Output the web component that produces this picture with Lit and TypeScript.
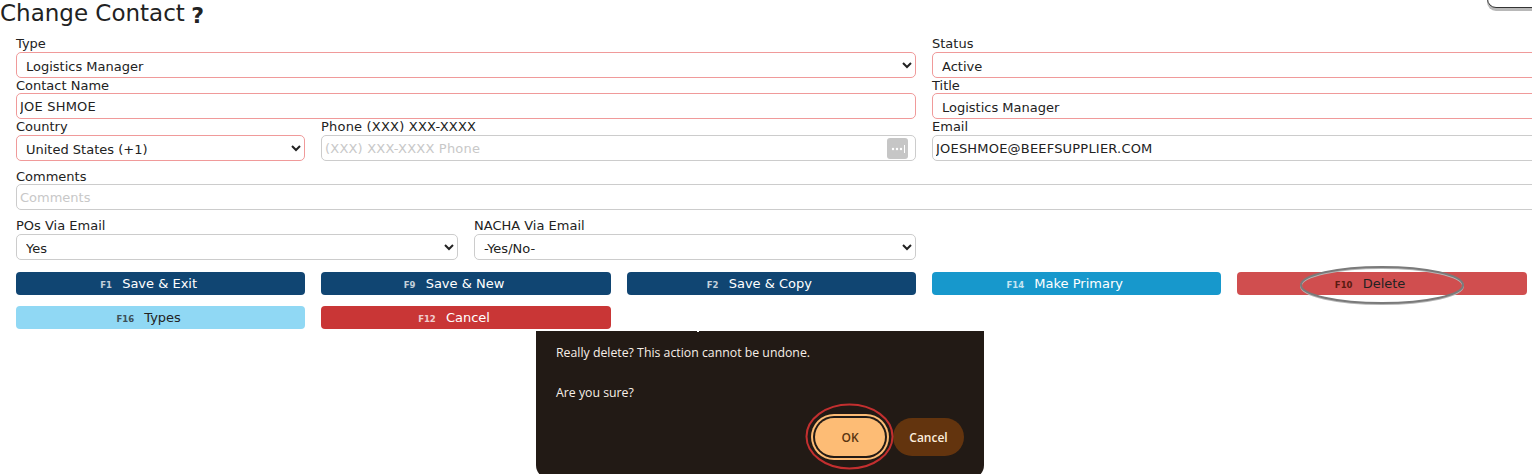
import { LitElement, html, css } from 'lit';
import { customElement } from 'lit/decorators.js';

/**
 * AppRoot - the "Change Contact" form with its delete confirmation open
 */
@customElement('app-root')
export class AppRoot extends LitElement {
  static styles = css`
    :host {
      display: block;
      position: relative;
      width: 1532px;
      height: 474px;
      overflow: hidden;
      background: #fff;
      color: #222;
      font-family: 'DejaVu Sans', Verdana, sans-serif;
      font-size: 13px;
    }

    h1 {
      margin: 0;
      height: 37px;
      font-size: 23px;
      font-weight: 400;
      line-height: 26px;
      color: #222;
      white-space: nowrap;
    }

    .help {
      font-size: 22px;
      font-weight: 700;
      line-height: 26px;
      position: relative;
      top: 2px;
      left: -1px;
    }

    .form {
      display: grid;
      grid-template-columns: 900px 900px;
      column-gap: 16px;
      padding-left: 16px;
    }

    .field {
      display: flex;
      flex-direction: column;
      min-width: 0;
    }

    label {
      height: 15px;
      line-height: 14px;
      white-space: nowrap;
    }

    .tall label {
      height: 16px;
      line-height: 15px;
    }

    .low label {
      line-height: 16px;
    }

    .caps {
      letter-spacing: 0.2px;
    }

    select,
    input {
      box-sizing: border-box;
      width: 100%;
      height: 26px;
      border: 1px solid #ccc;
      border-radius: 5px;
      background: #fff;
      color: #222;
      font: inherit;
      outline: none;
    }

    select {
      padding: 2px 5px 0;
    }

    input {
      padding: 0 3px;
    }

    input::placeholder {
      color: #c8c8c8;
    }

    .req select,
    .req input {
      border-color: #f09a9a;
    }

    .pad-text input {
      padding: 2px 3px 0 9px;
    }

    .pair {
      display: grid;
      column-gap: 16px;
    }

    .country {
      grid-template-columns: 289px 595px;
    }

    .phone-box {
      position: relative;
    }

    .dots {
      position: absolute;
      right: 8px;
      top: 3px;
      width: 21px;
      height: 21px;
      border-radius: 3px;
      background: #c6c6c6;
      display: flex;
      align-items: center;
      justify-content: center;
    }

    .row-comments {
      grid-column: 1 / -1;
      margin-top: 8px;
    }

    .row-via {
      margin-top: 8px;
    }

    .via {
      grid-template-columns: 442px 442px;
    }

    .buttons {
      display: grid;
      grid-template-columns: repeat(5, 1fr);
      gap: 11px 16px;
      width: 1510.8px;
      margin: 12px 0 0 16px;
    }

    button {
      height: 23px;
      padding: 0 24px 0 0;
      border: 0;
      border-radius: 4px;
      font: inherit;
      font-size: 13px;
      line-height: 23px;
      color: #fff;
    }

    button small {
      font-size: 8.5px;
      font-weight: 700;
      opacity: 0.75;
      margin-right: 6px;
    }

    .navy {
      background: #104572;
    }

    .blue {
      background: #1798cc;
    }

    .danger {
      background: #d04e4f;
      color: #222;
    }

    .danger small {
      color: #5a1a10;
      opacity: 1;
    }

    .sky {
      background: #90d8f4;
      color: #222;
    }

    .red {
      background: #c93636;
    }

    /* confirmation dialog */
    .dialog {
      position: absolute;
      left: 536px;
      top: 331px;
      width: 448px;
      height: 148px;
      box-sizing: border-box;
      padding: 12px 20px;
      border-radius: 0 0 14px 14px;
      background: #221a15;
      color: #f7efe7;
      font-family: 'Open Sans', 'Noto Sans', sans-serif;
      font-size: 12.3px;
      line-height: 20px;
    }

    .dialog::before {
      content: '';
      position: absolute;
      left: 161px;
      top: 0;
      width: 2px;
      height: 1px;
      background: #fff;
    }

    .dialog p {
      margin: 0 0 20px;
    }

    .actions {
      position: absolute;
      left: 279px;
      top: 87px;
      display: flex;
      align-items: center;
      gap: 8px;
    }

    .actions button {
      padding: 0;
      border-radius: 20px;
      font-family: inherit;
      font-size: 12px;
      font-weight: 600;
      height: 38px;
    }

    .ok {
      width: 70px;
      background: #fdbc75;
      color: #5a3410;
      box-shadow: 0 0 0 2px #221a15, 0 0 0 4px #fdbc75;
    }

    .cancel {
      width: 71px;
      background: #63340e;
      color: #fdeedd;
    }

    /* annotations drawn over the screenshot */
    .mark {
      position: absolute;
      left: 0;
      top: 0;
      pointer-events: none;
    }

    .callout {
      position: absolute;
      left: 1487px;
      top: -20px;
      width: 80px;
      height: 28px;
      box-sizing: border-box;
      border: 1px solid #333;
      border-radius: 9px;
      background: #fff;
      box-shadow: 0 3px 0 #b8b8b8;
    }
  `;

  _select(value: string) {
    return html`<select><option>${value}</option></select>`;
  }

  _button(key: string, text: string, kind: string) {
    return html`<button class=${kind}><small>${key}</small> ${text}</button>`;
  }

  render() {
    return html`
      <h1>Change Contact <span class="help">?</span></h1>
      <div class="form">
        <div class="field req"><label>Type</label>${this._select('Logistics Manager')}</div>
        <div class="field req"><label>Status</label>${this._select('Active')}</div>
        <div class="field req low"><label>Contact Name</label><input class="caps" value="JOE SHMOE" /></div>
        <div class="field req pad-text low"><label>Title</label><input value="Logistics Manager" /></div>
        <div class="pair country">
          <div class="field req tall"><label>Country</label>${this._select('United States (+1)')}</div>
          <div class="field tall">
            <label class="caps">Phone (XXX) XXX-XXXX</label>
            <div class="phone-box">
              <input class="caps" placeholder="(XXX) XXX-XXXX Phone" />
              <span class="dots">
                <svg width="16" height="8" viewBox="0 0 16 8" fill="#fff">
                  <circle cx="3" cy="4" r="1.2" />
                  <circle cx="7" cy="4" r="1.2" />
                  <circle cx="11" cy="4" r="1.2" />
                  <rect x="14" y="0" width="1" height="8" />
                </svg>
              </span>
            </div>
          </div>
        </div>
        <div class="field tall"><label>Email</label><input class="caps" value="JOESHMOE@BEEFSUPPLIER.COM" /></div>
        <div class="field row-comments low"><label>Comments</label><input placeholder="Comments" /></div>
        <div class="pair via row-via">
          <div class="field tall"><label>POs Via Email</label>${this._select('Yes')}</div>
          <div class="field tall"><label>NACHA Via Email</label>${this._select('-Yes/No-')}</div>
        </div>
      </div>
      <div class="buttons">
        ${this._button('F1', 'Save & Exit', 'navy')}
        ${this._button('F9', 'Save & New', 'navy')}
        ${this._button('F2', 'Save & Copy', 'navy')}
        ${this._button('F14', 'Make Primary', 'blue')}
        ${this._button('F10', 'Delete', 'danger')}
        ${this._button('F16', 'Types', 'sky')}
        ${this._button('F12', 'Cancel', 'red')}
      </div>
      <div class="dialog">
        <p>Really delete? This action cannot be undone.</p>
        <p>Are you sure?</p>
        <div class="actions">
          <button class="ok">OK</button>
          <button class="cancel">Cancel</button>
        </div>
      </div>
      <div class="callout"></div>
      <svg class="mark" width="1532" height="474" fill="none">
        <ellipse cx="1382" cy="286" rx="81" ry="18" stroke="#b5b5b5" stroke-width="2" />
        <ellipse cx="1382" cy="285" rx="81" ry="18" stroke="#7a7a7a" stroke-width="2" />
        <ellipse cx="849.5" cy="436.5" rx="43" ry="32" stroke="#c32f2f" stroke-width="2" />
      </svg>
    `;
  }
}
